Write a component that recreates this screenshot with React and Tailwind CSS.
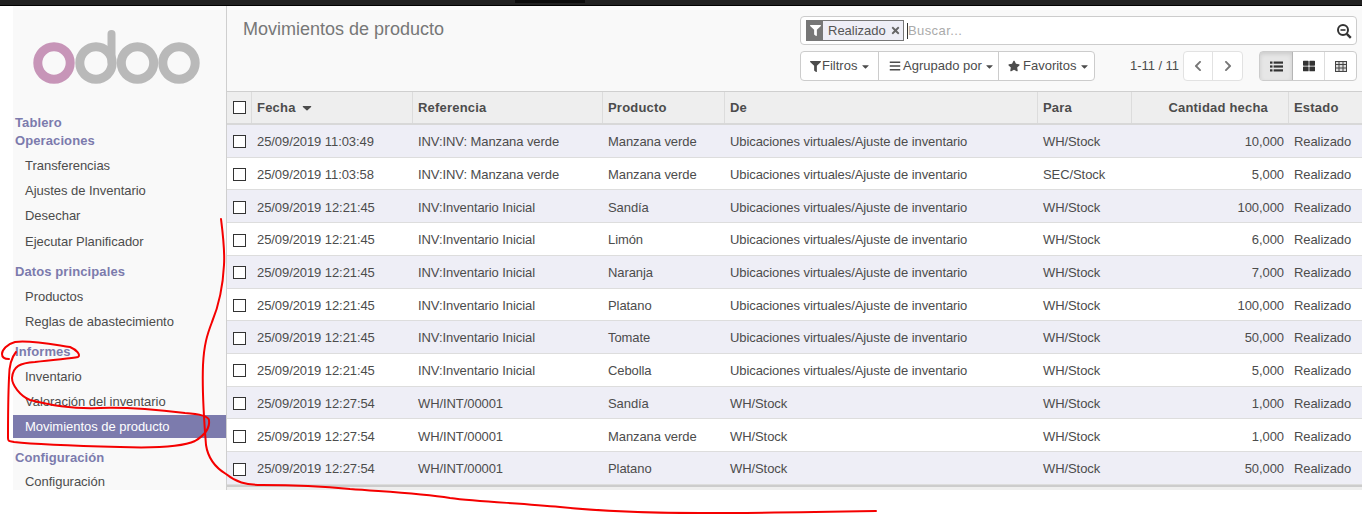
import React from "react";
import { FaFilter, FaTimes, FaBars, FaStar, FaChevronLeft, FaChevronRight, FaThLarge, FaCaretDown, FaSortDown } from "react-icons/fa";

const V = "Ubicaciones virtuales/Ajuste de inventario";
const rows = [
  ["25/09/2019 11:03:49", "INV:INV: Manzana verde", "Manzana verde", V, "WH/Stock", "10,000"],
  ["25/09/2019 11:03:58", "INV:INV: Manzana verde", "Manzana verde", V, "SEC/Stock", "5,000"],
  ["25/09/2019 12:21:45", "INV:Inventario Inicial", "Sandía", V, "WH/Stock", "100,000"],
  ["25/09/2019 12:21:45", "INV:Inventario Inicial", "Limón", V, "WH/Stock", "6,000"],
  ["25/09/2019 12:21:45", "INV:Inventario Inicial", "Naranja", V, "WH/Stock", "7,000"],
  ["25/09/2019 12:21:45", "INV:Inventario Inicial", "Platano", V, "WH/Stock", "100,000"],
  ["25/09/2019 12:21:45", "INV:Inventario Inicial", "Tomate", V, "WH/Stock", "50,000"],
  ["25/09/2019 12:21:45", "INV:Inventario Inicial", "Cebolla", V, "WH/Stock", "5,000"],
  ["25/09/2019 12:27:54", "WH/INT/00001", "Sandía", "WH/Stock", "WH/Stock", "1,000"],
  ["25/09/2019 12:27:54", "WH/INT/00001", "Manzana verde", "WH/Stock", "WH/Stock", "1,000"],
  ["25/09/2019 12:27:54", "WH/INT/00001", "Platano", "WH/Stock", "WH/Stock", "50,000"],
];

function Logo() {
  return (
    <svg width="213" height="70" viewBox="0 0 213 70" className="block">
      <circle cx="41" cy="38" r="16.2" fill="none" stroke="#c795b8" strokeWidth="9" />
      <g fill="none" stroke="#b9b9b9" strokeWidth="9" strokeLinecap="round">
        <circle cx="83" cy="38" r="16.2" />
        <path d="M98.5 37V9" strokeWidth="8" />
        <circle cx="124.5" cy="38" r="16.2" />
        <circle cx="166" cy="38" r="16.2" />
      </g>
    </svg>
  );
}

function Head({ children }) {
  return <div className="h-[18px] pl-[2px] font-bold text-[13px] tracking-[0.1px] leading-[20px] text-[#7c7bad]">{children}</div>;
}
function Item({ children }) {
  return <div className="h-[25.2px] pl-[12px] text-[13px] tracking-[-0.03px] leading-[25px] text-[#4c4c4c]">{children}</div>;
}

function Check({ className }) {
  return <span className={`block w-[13px] h-[13px] border border-[#333] bg-white ${className || ""}`} />;
}

function Sidebar() {
  return (
    <aside className="w-[213px] shrink-0 bg-[#f9f9f9] overflow-hidden">
      <div className="h-[107px] pt-[19px]"><Logo /></div>
      <Head>Tablero</Head>
      <Head>Operaciones</Head>
      <div className="h-[4px]" />
      <Item>Transferencias</Item>
      <Item>Ajustes de Inventario</Item>
      <Item>Desechar</Item>
      <Item>Ejecutar Planificador</Item>
      <div className="h-[8px]" />
      <Head>Datos principales</Head>
      <div className="h-[4px]" />
      <Item>Productos</Item>
      <Item>Reglas de abastecimiento</Item>
      <div className="h-[8px]" />
      <Head>Informes</Head>
      <div className="h-[4px]" />
      <Item>Inventario</Item>
      <Item>Valoración del inventario</Item>
      <div className="h-[23px] pl-[12px] text-[13px] tracking-[-0.03px] leading-[23px] bg-[#7c7bad] text-white">Movimientos de producto</div>
      <div className="h-[10px]" />
      <Head>Configuración</Head>
      <div className="h-[3px]" />
      <Item>Configuración</Item>
    </aside>
  );
}

const btn = "h-full flex items-center text-[13px] text-[#4c4c4c]";

function SearchIcon() {
  return (
    <svg width="16" height="16" viewBox="0 0 16 16" fill="none" stroke="#333" className="shrink-0">
      <circle cx="7" cy="7" r="5" strokeWidth="2" />
      <path d="M4.5 7h5" strokeWidth="1.6" />
      <path d="M10.8 10.8L14.8 14.8" strokeWidth="2.4" />
    </svg>
  );
}
function ListIcon() {
  return (
    <svg width="13" height="11" viewBox="0 0 13 11" fill="#333">
      <rect x="0" y="0.5" width="2.5" height="2.2" />
      <rect x="3.6" y="0.5" width="9.4" height="2.2" />
      <rect x="0" y="4.4" width="2.5" height="2.2" />
      <rect x="3.6" y="4.4" width="9.4" height="2.2" />
      <rect x="0" y="8.3" width="2.5" height="2.2" />
      <rect x="3.6" y="8.3" width="9.4" height="2.2" />
    </svg>
  );
}
function TableIcon() {
  return (
    <svg width="12" height="11" viewBox="0 0 12 11" fill="none" stroke="#444" strokeWidth="1">
      <rect x="0.5" y="0.5" width="11" height="10" fill="#ddd" />
      <path d="M0.5 3.5h11M0.5 7h11M4 0.5v10M8 0.5v10" />
    </svg>
  );
}

function ControlPanel() {
  return (
    <div className="h-[86px] bg-[#f9f9f9] border-b border-[#cfcfcf] flex justify-between pl-[16px] pr-[5px]">
      <h1 className="text-[18px] font-normal leading-[20px] pt-[13px] text-[#777]">Movimientos de producto</h1>
      <div className="w-[557px] pt-[10px]">
        <div className="h-[29px] bg-white border border-[#ccc] rounded-[4px] flex items-center pl-[5px] pr-[4px]">
          <div className="h-[21px] w-[98px] flex items-stretch border border-[#777] bg-[#eeeef6]">
            <span className="w-[16px] bg-[#777] flex items-center justify-center text-white"><FaFilter size={11} /></span>
            <span className="pl-[5px] text-[13px] leading-[17px] text-[#555] flex items-center gap-[4px]">Realizado <FaTimes size={11} className="text-[#666]" /></span>
          </div>
          <div className="ml-[3px] flex-1 border-l border-[#333] h-[16px] text-[13px] tracking-[0.4px] leading-[16px] text-[#aaa]">Buscar...</div>
          <SearchIcon />
        </div>
        <div className="mt-[6px] h-[30px] flex items-center">
          <div className="h-full flex bg-white border border-[#ccc] rounded-[4px]">
            <div className={`${btn} pl-[9px] w-[78px] gap-[1px] border-r border-[#ccc]`}><FaFilter size={11} />Filtros<FaCaretDown size={11} className="ml-[2px]" /></div>
            <div className={`${btn} pl-[10px] w-[120px] gap-[2px] border-r border-[#ccc]`}><FaBars size={12} />Agrupado por<FaCaretDown size={11} /></div>
            <div className={`${btn} pl-[9px] w-[95px] gap-[3px]`}><FaStar size={12} />Favoritos<FaCaretDown size={11} /></div>
          </div>
          <span className="ml-[35px] w-[48px] whitespace-nowrap text-[13px] tracking-[-0.05px] text-[#4c4c4c]">1-11 / 11</span>
          <div className="ml-[5px] h-full flex bg-white border border-[#e2e2e2] rounded-[4px] text-[#777]">
            <div className="w-[29px] flex items-center justify-center border-r border-[#e2e2e2]"><FaChevronLeft size={12} /></div>
            <div className="w-[29px] flex items-center justify-center"><FaChevronRight size={12} /></div>
          </div>
          <div className="ml-auto h-full flex border border-[#ccc] rounded-[4px] bg-white text-[#333]">
            <div className="w-[33px] flex items-center justify-center bg-[#e6e6e6] border-r border-[#b5b5b5] shadow-[inset_0_2px_4px_rgba(0,0,0,0.12)]"><ListIcon /></div>
            <div className="w-[32px] flex items-center justify-center border-r border-[#ddd]"><FaThLarge size={12} /></div>
            <div className="w-[31px] flex items-center justify-center"><TableIcon /></div>
          </div>
        </div>
      </div>
    </div>
  );
}

const cols = ["w-[161px]", "w-[190px]", "w-[122px]", "w-[313px]", "w-[94px]", "w-[157px]", "w-[72px]"];

function Table() {
  const th = "h-full flex items-center font-bold text-[13px] tracking-[0.2px] text-[#4c4c4c] border-l border-[#dcdcdc] pl-[5px]";
  return (
    <div className="text-[13px] tracking-[-0.08px] text-[#4c4c4c]">
      <div className="h-[33px] flex bg-[#eeeeee] border-b-2 border-[#d8d8d8]">
        <div className="w-[24px] pl-[6px] flex items-center"><Check /></div>
        <div className={`${th} ${cols[0]} gap-[4px]`}>Fecha <FaSortDown size={14} className="mb-[5px] scale-x-[1.1]" /></div>
        <div className={`${th} ${cols[1]}`}>Referencia</div>
        <div className={`${th} ${cols[2]}`}>Producto</div>
        <div className={`${th} ${cols[3]}`}>De</div>
        <div className={`${th} ${cols[4]}`}>Para</div>
        <div className={`${th} ${cols[5]} justify-end pr-[20px]`}>Cantidad hecha</div>
        <div className={`${th} ${cols[6]}`}>Estado</div>
      </div>
      {rows.map((r, i) => (
        <div key={i} className={`h-[32.73px] pt-[2px] flex items-center border-b border-[#dddddd] ${i % 2 === 0 ? "bg-[#eeeef6]" : "bg-white"}`}>
          <div className="w-[24px] pl-[6px]"><Check /></div>
          <div className={`${cols[0]} pl-[6px]`}>{r[0]}</div>
          <div className={`${cols[1]} pl-[6px]`}>{r[1]}</div>
          <div className={`${cols[2]} pl-[6px]`}>{r[2]}</div>
          <div className={`${cols[3]} pl-[6px]`}>{r[3]}</div>
          <div className={`${cols[4]} pl-[6px]`}>{r[4]}</div>
          <div className={`${cols[5]} text-right pr-[4px]`}>{r[5]}</div>
          <div className={`${cols[6]} pl-[6px]`}>Realizado</div>
        </div>
      ))}
      <div className="h-[2px] bg-[#cccccc]" />
      <div className="h-[3px] bg-[#eeeeee]" />
    </div>
  );
}

function Annotations() {
  return (
    <svg width="1362" height="514" viewBox="0 0 1362 514" className="absolute inset-0 pointer-events-none" fill="none" stroke="#f50000" strokeWidth="2" strokeLinecap="round" strokeLinejoin="round">
      <path d="M221 219C223 235 225 250 224 265C223 285 219 305 212 322C207 335 204 345 203 365C202 390 204 420 206 445C208 458 216 468 226 474C236 482 245 485 262 485C290 485 320 486 350 489C390 492 420 493 450 498C480 502 520 503 560 507C600 511 650 513 700 513C760 513 820 512 876 511" />
      <path d="M16 352C11 358 9 365 9 378C8 400 8 420 8 438C8 442 10 441 14 442C40 445 80 446 120 447C150 448 180 448 195 441C205 435 210 428 209 420C208 416 200 414 185 413C160 410 130 407 100 408C70 409 50 405 30 400C20 396 12 385 12 378C13 366 20 363 35 362C55 359 70 359 78 357C81 355 77 350 70 347C50 344 30 340 15 342C7 344 2 350 2 354C2 358 6 359 9 359" />
    </svg>
  );
}

export default function App() {
  return (
    <div className="relative w-[1362px] h-[514px] bg-white overflow-hidden [font-family:'Liberation_Sans',Arial,sans-serif]">
      <div className="h-[6px] bg-[#212121] border-b border-black" />
      <div className="absolute left-[515px] top-0 w-[70px] h-[3px] bg-[#0b0b0b]" />
      <div className="h-[484px] flex pl-[13px]">
        <Sidebar />
        <main className="flex-1 border-l border-[#cfcfcf] overflow-hidden bg-white">
          <ControlPanel />
          <Table />
        </main>
      </div>
      <Annotations />
    </div>
  );
}
